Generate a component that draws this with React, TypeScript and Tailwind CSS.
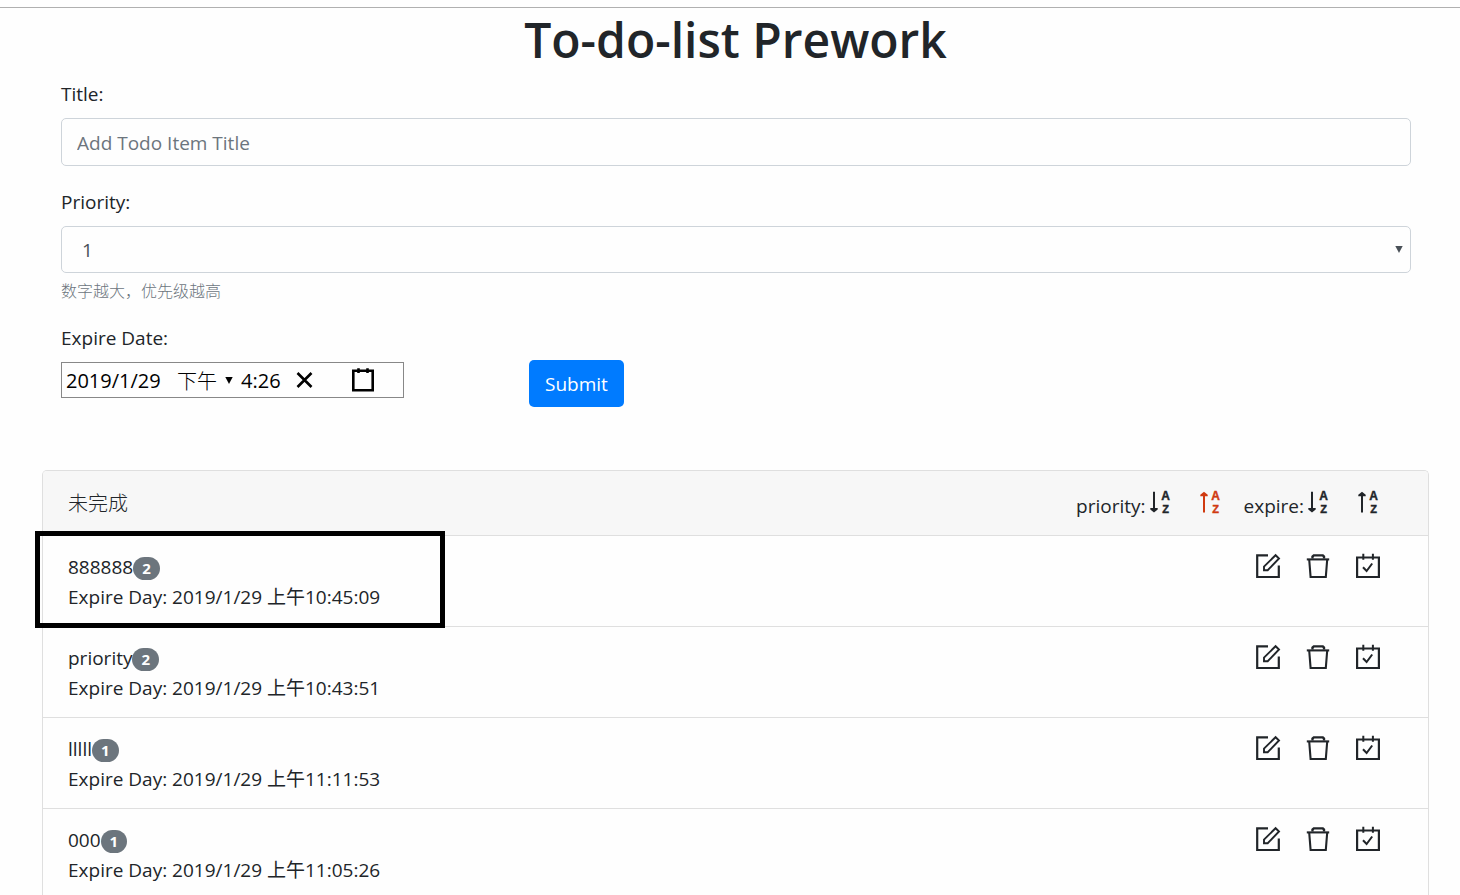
import React from "react";

type Todo = { title: string; priority: number; expire: string; marked?: boolean };

const todos: Todo[] = [
  { title: "888888", priority: 2, expire: "2019/1/29 上午10:45:09", marked: true },
  { title: "priority", priority: 2, expire: "2019/1/29 上午10:43:51" },
  { title: "lllll", priority: 1, expire: "2019/1/29 上午11:11:53" },
  { title: "000", priority: 1, expire: "2019/1/29 上午11:05:26" },
];

function EditIcon() {
  return (
    <svg viewBox="0 0 24 24" className="size-6 overflow-visible" fill="none" stroke="currentColor" strokeWidth="2.2">
      <path d="M12 1.3H1.2V23h21.6V11.5" />
      <path d="M8 16.2v-3.6L19.6 1.2l3.4 3.3L11.7 16.2z" strokeWidth="1.9" />
    </svg>
  );
}

function TrashIcon() {
  return (
    <svg viewBox="0 0 24 24" className="size-6 overflow-visible" fill="none" stroke="currentColor" strokeWidth="2.1">
      <path d="M.8 5.4h22.4" />
      <path d="M6.5 4.5V2.6L7.8 1.4h9L18 2.6v1.9" strokeWidth="2.4" />
      <path d="M3.2 5.5 4.6 23h15.2L21.2 5.5" />
    </svg>
  );
}

function CalendarCheckIcon() {
  return (
    <svg viewBox="0 0 24 24" className="size-6 overflow-visible" fill="none" stroke="currentColor" strokeWidth="2.2">
      <path d="M1.1 3.5h21.8V23H1.1z" />
      <path d="M7.3-.3v6M16.9-.3v6" strokeWidth="2" />
      <path d="m7 13.2 3.6 3.8L16.2 9.5" strokeWidth="2" />
    </svg>
  );
}

function SortIcon({ up = false }: { up?: boolean }) {
  return (
    <svg viewBox="0 0 24 24" className="size-6 overflow-visible" fill="currentColor">
      {up ? (
        <path d="M5 22.5V6.2H2.3V4.8L6 1.8l3.7 3v1.4H7v16.3z" />
      ) : (
        <path d="M5 1.8v16.3H2.3v1.4l3.7 3 3.7-3v-1.4H7V1.8z" />
      )}
      <g className="font-['Liberation_Sans',sans-serif] font-bold" textAnchor="middle" stroke="currentColor" strokeWidth=".4">
        <text x="17.5" y="10" fontSize="12">A</text>
        <text x="17.5" y="23" fontSize="11">Z</text>
      </g>
    </svg>
  );
}

function Triangle() {
  return (
    <svg viewBox="0 0 8 7" className="h-[7px] w-2" fill="currentColor">
      <path d="M.3 0h7.4L4 7z" />
    </svg>
  );
}

function TodoRow({ todo }: { todo: Todo }) {
  return (
    <li className="relative flex items-start justify-between border-b border-[#dfdfdf] pb-3.5 pl-[25px] pr-12 pt-4">
      <div className="leading-[30px]">
        <div className="flex items-center">
          <span>{todo.title}</span>
          <span className="mt-0.5 rounded-full bg-[#6c757d] px-[9px] text-[15px] font-bold leading-[23px] text-white">
            {todo.priority}
          </span>
        </div>
        <div>Expire Day: {todo.expire}</div>
      </div>
      <div className="flex gap-[26px] pt-0.5">
        <button type="button" aria-label="Edit"><EditIcon /></button>
        <button type="button" aria-label="Delete"><TrashIcon /></button>
        <button type="button" aria-label="Complete"><CalendarCheckIcon /></button>
      </div>
      {todo.marked && (
        <div className="pointer-events-none absolute -left-2 -top-[5px] h-[97px] w-[410px] border-[5px] border-black" />
      )}
    </li>
  );
}

export default function App() {
  return (
    <div className="h-screen overflow-hidden bg-[#fefefe] pt-[7px] font-['Open_Sans','Noto_Sans_CJK_SC',sans-serif] text-[19px] text-[#212529]">
      <div className="border-t border-[#b0b0b0]" />
      <main className="ml-[42px] mr-[31px]">
        <h1 className="pt-0.5 text-center text-5xl font-semibold leading-[60px]">To-do-list Prework</h1>
        <form className="pl-[19px] pr-[18px] pt-[9px]" onSubmit={(e) => e.preventDefault()}>
          <label htmlFor="title" className="block leading-[30px]">Title:</label>
          <input
            id="title"
            type="text"
            placeholder="Add Todo Item Title"
            className="mt-[9px] block h-12 w-full rounded-[5px] border border-[#ced4da] bg-transparent px-[15px] pt-0.5 placeholder:text-[#6c757d]"
          />
          <label htmlFor="priority" className="mt-[21px] block leading-[30px]">Priority:</label>
          <div className="relative mt-[9px]">
            <select
              id="priority"
              defaultValue="1"
              className="block h-[47px] w-full appearance-none rounded-[5px] border border-[#ced4da] bg-transparent px-5 pt-0.5 text-[#495057]"
            >
              <option>1</option>
              <option>2</option>
              <option>3</option>
            </select>
            <span className="pointer-events-none absolute right-2 top-5 flex text-[#495057]"><Triangle /></span>
          </div>
          <small className="mt-[3px] block font-['Noto_Sans_CJK_SC',sans-serif] text-base font-light leading-[28px] text-[#6c757d]">数字越大，优先级越高</small>
          <div className="mt-[19px] flex items-end">
            <div className="w-[468px]">
              <label htmlFor="date" className="block leading-[30px]">Expire Date:</label>
              <div className="mb-[9px] mt-[9px] flex h-9 w-[343px] items-center border border-[#888888] pl-1 text-xl text-black">
                <input id="date" defaultValue="2019/1/29" className="w-[111px] bg-transparent pt-0.5" />
                <div className="relative flex items-center">
                  <select aria-label="AM or PM" defaultValue="下午" className="w-[64px] appearance-none bg-transparent pt-0.5 font-['Noto_Sans_CJK_SC',sans-serif] font-light">
                    <option>上午</option>
                    <option>下午</option>
                  </select>
                  <span className="pointer-events-none absolute right-2"><Triangle /></span>
                </div>
                <input aria-label="Time" defaultValue="4:26" className="w-[54px] bg-transparent pt-0.5" />
                <button type="button" aria-label="Clear">
                  <svg viewBox="0 0 18 18" className="size-[18px]" fill="none" stroke="currentColor" strokeWidth="2.6">
                    <path d="m2.5 2 14 14M16.5 2l-14 14" />
                  </svg>
                </button>
                <button type="button" aria-label="Pick a date" className="ml-[38px]">
                  <svg viewBox="0 0 24 24" className="size-6" fill="none" stroke="currentColor" strokeWidth="2.6">
                    <path d="M2.3 2.8h19.4v19.4H2.3z" />
                    <path d="M7.5.2V5M16.5.2V5" />
                  </svg>
                </button>
              </div>
            </div>
            <button type="submit" className="h-[47px] rounded-[5px] bg-[#007bff] px-4 pt-0.5 text-white">Submit</button>
          </div>
        </form>
        <section className="mt-[63px] rounded-t-[5px] border border-b-0 border-[#dfdfdf]">
          <header className="flex h-[65px] items-center justify-between rounded-t border-b border-[#dfdfdf] bg-[#f7f7f7] pl-[25px] pr-12">
            <h2 className="font-['Noto_Sans_CJK_SC',sans-serif] text-xl font-light">未完成</h2>
            <div className="flex items-center pb-0.5">
              <span className="mr-0.5 pt-2">priority:</span>
              <button type="button" aria-label="Priority descending"><SortIcon /></button>
              <button type="button" aria-label="Priority ascending" className="ml-[26px] text-[#d03a10]"><SortIcon up /></button>
              <span className="ml-[22px] mr-0.5 pt-2">expire:</span>
              <button type="button" aria-label="Expire descending"><SortIcon /></button>
              <button type="button" aria-label="Expire ascending" className="ml-[26px]"><SortIcon up /></button>
            </div>
          </header>
          <ul>
            {todos.map((todo) => (
              <TodoRow key={todo.title} todo={todo} />
            ))}
          </ul>
        </section>
      </main>
    </div>
  );
}
